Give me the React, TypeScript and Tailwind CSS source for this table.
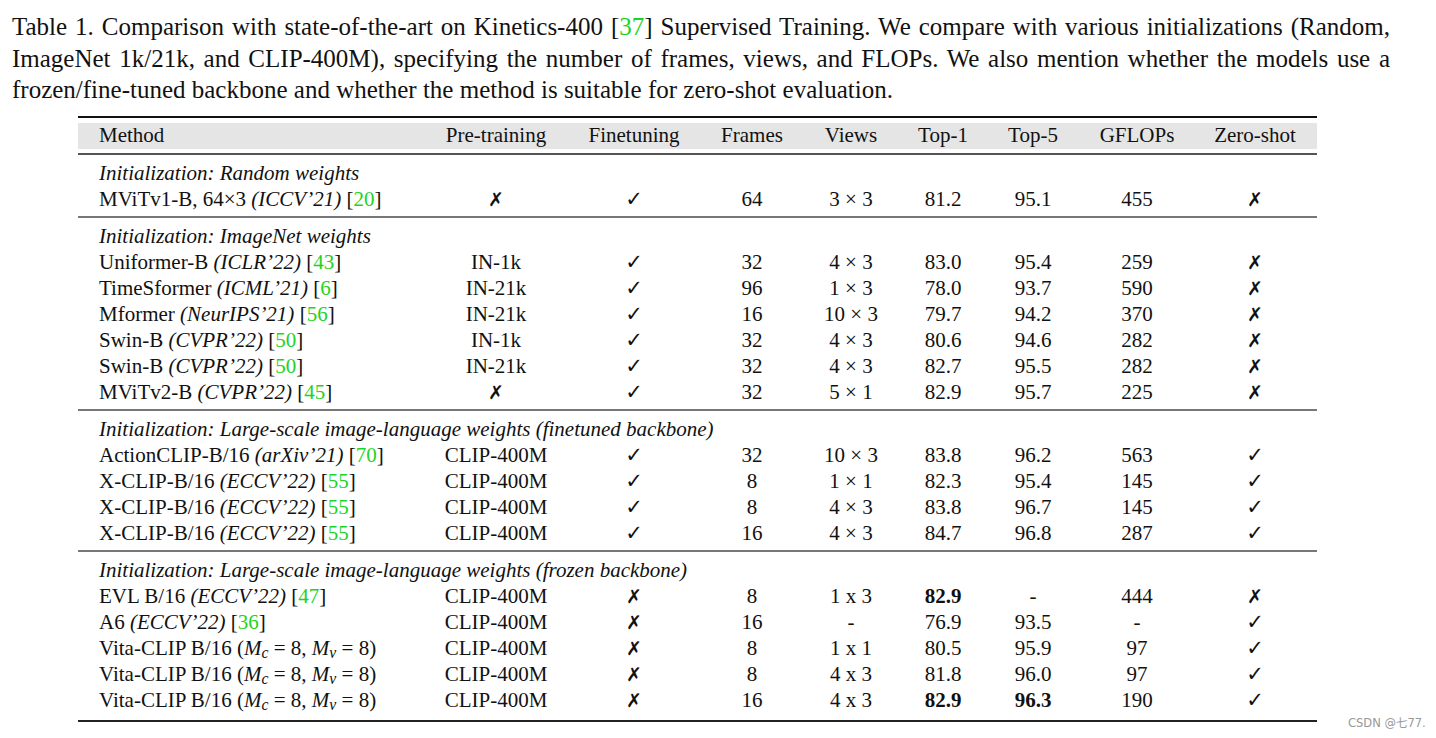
import React from "react";

type Cell = React.ReactNode;

const COLS = "grid grid-cols-[349px_138px_138px_98px_100px_84px_96px_112px_124px]";

function Cite({ n }: { n: string }) {
  return (
    <span>
      [<span className="text-[#1ed41e]">{n}</span>]
    </span>
  );
}

const Yes = () => <span className="font-['DejaVu_Sans',sans-serif] font-bold text-[21px]">✓</span>;
const No = () => <span className="font-['DejaVu_Sans',sans-serif] font-bold text-[19px]">✗</span>;

function Vita() {
  return (
    <span>
      Vita-CLIP B/16 (<i>M</i>
      <sub><i>c</i></sub>&nbsp;=&nbsp;8, <i>M</i>
      <sub><i>v</i></sub>&nbsp;=&nbsp;8)
    </span>
  );
}

const sections: { label: string; rows: Cell[][] }[] = [
  {
    label: "Initialization: Random weights",
    rows: [
      [<>MViTv1-B, 64×3 <i>(ICCV’21)</i> <Cite n="20" /></>, <No />, <Yes />, "64", "3 × 3", "81.2", "95.1", "455", <No />],
    ],
  },
  {
    label: "Initialization: ImageNet weights",
    rows: [
      [<>Uniformer-B <i>(ICLR’22)</i> <Cite n="43" /></>, "IN-1k", <Yes />, "32", "4 × 3", "83.0", "95.4", "259", <No />],
      [<>TimeSformer <i>(ICML’21)</i> <Cite n="6" /></>, "IN-21k", <Yes />, "96", "1 × 3", "78.0", "93.7", "590", <No />],
      [<>Mformer <i>(NeurIPS’21)</i> <Cite n="56" /></>, "IN-21k", <Yes />, "16", "10 × 3", "79.7", "94.2", "370", <No />],
      [<>Swin-B <i>(CVPR’22)</i> <Cite n="50" /></>, "IN-1k", <Yes />, "32", "4 × 3", "80.6", "94.6", "282", <No />],
      [<>Swin-B <i>(CVPR’22)</i> <Cite n="50" /></>, "IN-21k", <Yes />, "32", "4 × 3", "82.7", "95.5", "282", <No />],
      [<>MViTv2-B <i>(CVPR’22)</i> <Cite n="45" /></>, <No />, <Yes />, "32", "5 × 1", "82.9", "95.7", "225", <No />],
    ],
  },
  {
    label: "Initialization: Large-scale image-language weights (finetuned backbone)",
    rows: [
      [<>ActionCLIP-B/16 <i>(arXiv’21)</i> <Cite n="70" /></>, "CLIP-400M", <Yes />, "32", "10 × 3", "83.8", "96.2", "563", <Yes />],
      [<>X-CLIP-B/16 <i>(ECCV’22)</i> <Cite n="55" /></>, "CLIP-400M", <Yes />, "8", "1 × 1", "82.3", "95.4", "145", <Yes />],
      [<>X-CLIP-B/16 <i>(ECCV’22)</i> <Cite n="55" /></>, "CLIP-400M", <Yes />, "8", "4 × 3", "83.8", "96.7", "145", <Yes />],
      [<>X-CLIP-B/16 <i>(ECCV’22)</i> <Cite n="55" /></>, "CLIP-400M", <Yes />, "16", "4 × 3", "84.7", "96.8", "287", <Yes />],
    ],
  },
  {
    label: "Initialization: Large-scale image-language weights (frozen backbone)",
    rows: [
      [<>EVL B/16 <i>(ECCV’22)</i> <Cite n="47" /></>, "CLIP-400M", <No />, "8", "1 x 3", <b>82.9</b>, "-", "444", <No />],
      [<>A6 <i>(ECCV’22)</i> <Cite n="36" /></>, "CLIP-400M", <No />, "16", "-", "76.9", "93.5", "-", <Yes />],
      [<Vita />, "CLIP-400M", <No />, "8", "1 x 1", "80.5", "95.9", "97", <Yes />],
      [<Vita />, "CLIP-400M", <No />, "8", "4 x 3", "81.8", "96.0", "97", <Yes />],
      [<Vita />, "CLIP-400M", <No />, "16", "4 x 3", <b>82.9</b>, <b>96.3</b>, "190", <Yes />],
    ],
  },
];

const HEADERS = ["Method", "Pre-training", "Finetuning", "Frames", "Views", "Top-1", "Top-5", "GFLOPs", "Zero-shot"];

function Row({ cells }: { cells: Cell[] }) {
  return (
    <div className={`${COLS} h-[26px] items-start leading-[24px]`}>
      {cells.map((c, i) => (
        <div key={i} className={i === 0 ? "pl-[21px] whitespace-nowrap" : "text-center whitespace-nowrap"}>
          {c}
        </div>
      ))}
    </div>
  );
}

export default function App() {
  return (
    <div className="relative w-[1436px] h-[738px] bg-white text-[#111] font-['Liberation_Serif','Times_New_Roman',serif]">
      <p className="ml-[12px] w-[1378px] pt-[11px] text-[25px] leading-[31.5px] text-justify">
        Table 1. Comparison with state-of-the-art on Kinetics-400 <Cite n="37" /> Supervised Training. We compare with
        various initializations (Random, ImageNet 1k/21k, and CLIP-400M), specifying the number of frames, views, and
        FLOPs. We also mention whether the models use a frozen/fine-tuned backbone and whether the method is suitable
        for zero-shot evaluation.
      </p>

      <div className="ml-[78px] mt-[10px] w-[1239px] text-[21px]">
        {/* header */}
        <div className="border-t-2 border-[#111] pt-[5px] pb-[4px]">
          <div className="bg-[#e5e5e5]">
            <Row cells={HEADERS} />
          </div>
        </div>

        {sections.map((s, si) => (
          <div
            key={si}
            className={`border-t-2 ${si === 0 ? "border-[#555]" : "border-[#777]"} pt-[6px] ${si === 3 ? "pb-[6px]" : "pb-[3px]"}`}
          >
            <div className="h-[26px] leading-[24px] pl-[21px] italic whitespace-nowrap">{s.label}</div>
            {s.rows.map((r, ri) => (
              <Row key={ri} cells={r} />
            ))}
          </div>
        ))}
        <div className="border-t-2 border-[#222]" />
      </div>

      <span className="absolute left-[1348px] top-[715px] text-[11.5px] text-[#999] font-['DejaVu_Sans','Noto_Sans_CJK_SC',sans-serif]">
        CSDN @七77.
      </span>
    </div>
  );
}
